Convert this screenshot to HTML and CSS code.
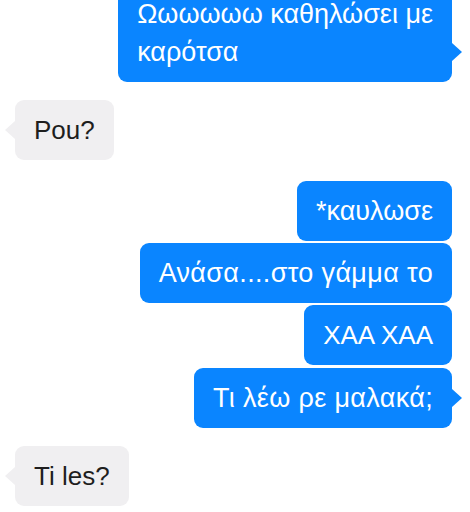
FILE: index.html
```html
<!DOCTYPE html>
<html lang="el">
<head>
<meta charset="utf-8">
<title>Chat</title>
<link rel="stylesheet" href="styles.css">
</head>
<body>
<div class="thread">
  <div class="group sent-group">
    <div class="bubble sent el tight tail">Ωωωωωω καθηλώσει με<br>καρότσα</div>
  </div>
  <div class="group recv-group">
    <div class="bubble recv tail">Pou?</div>
  </div>
  <div class="group sent-group stack">
    <div class="bubble sent el tight">*καυλωσε</div>
    <div class="bubble sent el">Ανάσα....στο γάμμα το</div>
    <div class="bubble sent">ΧΑΑ ΧΑΑ</div>
    <div class="bubble sent el tail last">Τι λέω ρε μαλακά;</div>
  </div>
  <div class="group recv-group">
    <div class="bubble recv tail">Ti les?</div>
  </div>
</div>
</body>
</html>
```

FILE: styles.css
```css
html, body {
  margin: 0;
  padding: 0;
  background: #ffffff;
  overflow: hidden;
}

.thread {
  display: flex;
  flex-direction: column;
  margin-top: -16px;
  padding: 0 18px 0 15px;
  font-family: "Liberation Sans", Arial, "Helvetica Neue", sans-serif;
  font-size: 26px;
}

.group {
  display: flex;
  flex-direction: column;
}

.sent-group {
  align-items: flex-end;
}

.recv-group {
  align-items: flex-start;
}

.group + .group {
  margin-top: 18px;
}

.recv-group + .sent-group {
  margin-top: 21px;
}

.sent-group + .recv-group {
  margin-top: 18px;
}

.stack {
  gap: 2px;
}

.stack .last {
  margin-top: 1px;
}

.bubble {
  position: relative;
  padding: 11px 19px;
  line-height: 38px;
  border-radius: 9px;
  white-space: nowrap;
}

.el {
  font-size: 27px;
  letter-spacing: 0.35px;
}

.el.tight {
  letter-spacing: 0;
}

.sent {
  background: #0a85ff;
  color: #ffffff;
}

.recv {
  background: #f0eff1;
  color: #1e1e1e;
}

.tail::after {
  content: "";
  position: absolute;
  bottom: 21px;
  width: 0;
  height: 0;
  border-top: 9px solid transparent;
  border-bottom: 9px solid transparent;
}

.sent.tail::after {
  right: -10px;
  border-left: 10px solid #0a85ff;
}

.recv.tail::after {
  left: -10px;
  border-right: 10px solid #f0eff1;
}
```
